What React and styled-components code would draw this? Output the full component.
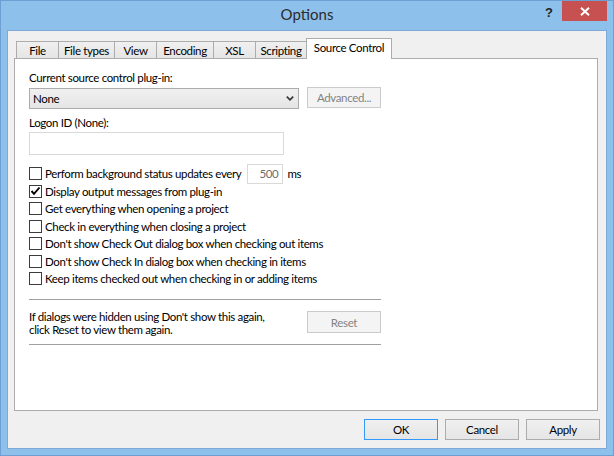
import React from 'react';
import styled, { createGlobalStyle, css } from 'styled-components';

const GlobalStyle = createGlobalStyle`
  html, body { margin: 0; padding: 0; }
  body {
    width: 614px;
    height: 456px;
    overflow: hidden;
    font-family: Lato, "Liberation Sans", sans-serif;
    font-size: 11.5px;
    letter-spacing: -0.35px;
    color: #000;
  }
  * { box-sizing: border-box; }
`;

const Window = styled.div`
  width: 614px;
  height: 456px;
  background: #8ec0ec;
  border: 1px solid #6e9fd2;
  display: flex;
  flex-direction: column;
`;

const TitleBar = styled.div`
  height: 29px;
  flex: none;
  display: grid;
  grid-template-columns: 1fr auto 1fr;
  align-items: start;
`;

const Title = styled.div`
  grid-column: 2;
  font-size: 15px;
  letter-spacing: 0;
  line-height: 27px;
  color: #2b2b2b;
`;

const Controls = styled.div`
  grid-column: 3;
  justify-self: end;
  display: flex;
  align-items: flex-start;
  margin-right: 6px;
`;

const HelpButton = styled.div`
  width: 26px;
  height: 20px;
  display: flex;
  align-items: center;
  justify-content: center;
  font-family: "Liberation Sans", sans-serif;
  font-weight: bold;
  font-size: 13px;
  letter-spacing: 0;
  color: #222;
  padding-top: 2px;
`;

const CloseButton = styled.div`
  width: 45px;
  height: 20px;
  background: #c75050;
  display: flex;
  align-items: center;
  justify-content: center;
`;

const Client = styled.div`
  flex: 1;
  margin: 0 6px 6px;
  border: 1px solid #7ea9d6;
  background: #f0f0f0;
  padding: 7px 8px 8px 6px;
  display: flex;
  flex-direction: column;
`;

const TabStrip = styled.div`
  height: 20px;
  display: flex;
  align-items: flex-end;
  padding-left: 2px;
  position: relative;
  z-index: 1;
`;

const Tab = styled.div`
  width: ${p => p.$w}px;
  height: 17px;
  line-height: 17px;
  text-align: center;
  border: 1px solid #acacac;
  border-bottom: none;
  background: linear-gradient(#f0f0f0, #e5e5e5);
  white-space: nowrap;
  & + & { margin-left: -1px; }
  ${p => p.$active && css`
    height: 21px;
    line-height: 18px;
    margin-bottom: -1px;
    background: #fff;
    position: relative;
    z-index: 2;
  `}
`;

const Panel = styled.div`
  height: 353px;
  flex: none;
  background: #fff;
  border: 1px solid #acacac;
  padding: 11px 14px 0;
  display: flex;
  flex-direction: column;
  align-items: flex-start;
`;

const Column = styled.div`
  width: 352px;
  display: flex;
  flex-direction: column;
`;

const Label = styled.div`
  line-height: 15px;
  margin-top: ${p => p.$mt || 0}px;
  white-space: nowrap;
`;

const ComboRow = styled.div`
  margin-top: 3px;
  display: flex;
  align-items: flex-start;
  justify-content: space-between;
`;

const Combo = styled.div`
  width: 270px;
  height: 21px;
  border: 1px solid #acacac;
  background: linear-gradient(#f0f0f0, #e5e5e5);
  display: flex;
  align-items: center;
  justify-content: space-between;
  padding: 0 4px 0 3px;
  line-height: 19px;
`;

const Button = styled.div`
  width: ${p => p.$w || 74}px;
  height: ${p => p.$h || 21}px;
  flex: none;
  border: 1px solid ${p => (p.$default ? '#3399ff' : '#acacac')};
  background: linear-gradient(#f0f0f0, #e5e5e5);
  display: flex;
  align-items: center;
  justify-content: center;
  margin-top: ${p => p.$mt || 0}px;
  ${p => p.$disabled && css`
    border-color: #c9cccf;
    background: #f4f4f4;
    color: #838383;
  `}
`;

const TextBox = styled.div`
  width: ${p => p.$w}px;
  height: ${p => p.$h}px;
  flex: none;
  border: 1px solid #d9d9d9;
  background: #fff;
  margin-top: ${p => p.$mt || 0}px;
  margin-left: ${p => p.$ml || 0}px;
  color: #6d6d6d;
  text-align: right;
  padding-right: 4px;
  line-height: ${p => p.$h - 2}px;
`;

const CheckList = styled.div`
  margin-top: 10px;
  display: flex;
  flex-direction: column;
`;

const CheckRow = styled.div`
  height: 17.5px;
  display: flex;
  align-items: center;
  white-space: nowrap;
`;

const Box = styled.div`
  width: 13px;
  height: 13px;
  flex: none;
  border: 1px solid #3c3c3c;
  background: #fff;
  margin-right: 3px;
  display: flex;
`;

const Unit = styled.span`
  margin-left: 4px;
`;

const Separator = styled.div`
  height: 1px;
  background: #a0a0a0;
  margin-top: ${p => p.$mt}px;
`;

const InfoRow = styled.div`
  margin-top: 10px;
  display: flex;
  justify-content: space-between;
  align-items: flex-start;
`;

const InfoText = styled.div`
  line-height: 13px;
  white-space: nowrap;
`;

const Footer = styled.div`
  margin-top: 8px;
  margin-right: -2px;
  display: flex;
  justify-content: flex-end;
  gap: 7px;
`;

const Check = ({ checked, children }) => (
  <CheckRow>
    <Box>
      {checked && (
        <svg width="11" height="11" viewBox="0 0 11 11">
          <polyline points="1.5,5 4,7.8 9.5,1.5" fill="none" stroke="#000" strokeWidth="1.9" />
        </svg>
      )}
    </Box>
    {children}
  </CheckRow>
);

const tabs = [
  ['File', 43],
  ['File types', 57],
  ['View', 43],
  ['Encoding', 58],
  ['XSL', 43],
  ['Scripting', 52],
  ['Source Control', 86],
];

export default function App() {
  return (
    <>
      <GlobalStyle />
      <Window>
        <TitleBar>
          <Title>Options</Title>
          <Controls>
            <HelpButton>?</HelpButton>
            <CloseButton>
              <svg width="10" height="9" viewBox="0 0 10 9">
                <path d="M1 0.8 L9 8.2 M9 0.8 L1 8.2" stroke="#fff" strokeWidth="2" />
              </svg>
            </CloseButton>
          </Controls>
        </TitleBar>
        <Client>
          <TabStrip>
            {tabs.map(([t, w]) => (
              <Tab key={t} $w={w} $active={t === 'Source Control'}>{t}</Tab>
            ))}
          </TabStrip>
          <Panel>
            <Column>
              <Label>Current source control plug-in:</Label>
              <ComboRow>
                <Combo>
                  <span>None</span>
                  <svg width="8" height="5" viewBox="0 0 8 5">
                    <polyline points="0.8,0.6 4,3.8 7.2,0.6" fill="none" stroke="#333" strokeWidth="1.6" />
                  </svg>
                </Combo>
                <Button $disabled $mt={-1}>Advanced...</Button>
              </ComboRow>
              <Label $mt={6}>Logon ID (None):</Label>
              <TextBox $w={255} $h={23} $mt={2} />
              <CheckList>
                <Check>
                  Perform background status updates every
                  <TextBox $w={36} $h={20} $ml={6}>500</TextBox>
                  <Unit>ms</Unit>
                </Check>
                <Check checked>Display output messages from plug-in</Check>
                <Check>Get everything when opening a project</Check>
                <Check>Check in everything when closing a project</Check>
                <Check>Don't show Check Out dialog box when checking out items</Check>
                <Check>Don't show Check In dialog box when checking in items</Check>
                <Check>Keep items checked out when checking in or adding items</Check>
              </CheckList>
              <Separator $mt={11.5} />
              <InfoRow>
                <InfoText>
                  If dialogs were hidden using Don't show this again,
                  <br />
                  click Reset to view them again.
                </InfoText>
                <Button $disabled $mt={1} $h={22}>Reset</Button>
              </InfoRow>
              <Separator $mt={8} />
            </Column>
          </Panel>
          <Footer>
            <Button $default>OK</Button>
            <Button>Cancel</Button>
            <Button>Apply</Button>
          </Footer>
        </Client>
      </Window>
    </>
  );
}
